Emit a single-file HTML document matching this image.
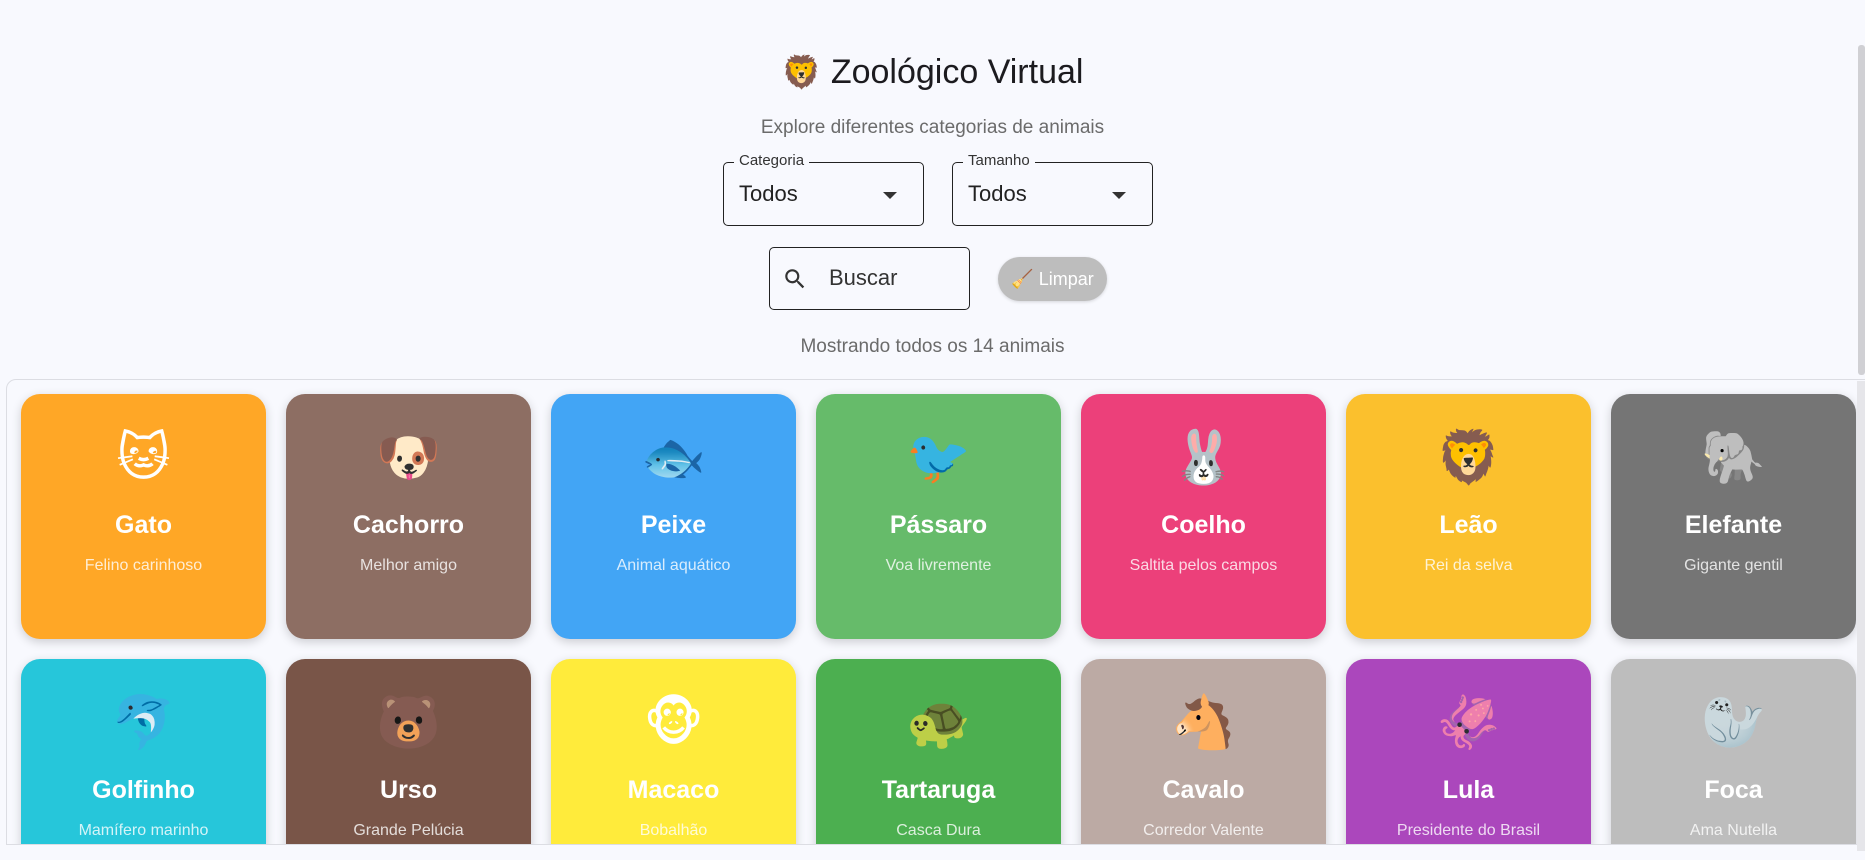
<!DOCTYPE html>
<html><head><meta charset="utf-8"><style>
*{box-sizing:border-box;margin:0;padding:0}
body{width:1865px;height:860px;overflow:hidden;background:#f8f9fe;font-family:"Liberation Sans","DejaVu Sans",sans-serif;position:relative;color:#1c1b1f}
.abs{position:absolute}
h1{position:absolute;left:0;width:1865px;top:50px;text-align:center;font-size:34px;font-weight:500;color:#1c1b1f;line-height:44px}
.sub{left:0;width:1865px;top:117px;text-align:center;font-size:19px;color:#6b6b6b}
.sel{border:1.5px solid #222;border-radius:5px;height:64px;width:201px;top:162px}
.sel .lab{position:absolute;top:-11px;left:10px;background:#f8f9fe;padding:0 5px;font-size:15px;color:#333}
.sel .val{position:absolute;left:15px;top:18px;font-size:22px;color:#222}
.sel .arr{position:absolute;right:26px;top:29px;width:0;height:0;border-left:7px solid transparent;border-right:7px solid transparent;border-top:7px solid #333}
.search{left:769px;top:247px;width:201px;height:63px;border:1.5px solid #222;border-radius:5px}
.btn{left:998px;top:257px;width:109px;height:44px;border-radius:22px;background:#bdbdbd;color:#fff;font-size:18px;line-height:44px;text-align:center;box-shadow:0 1px 3px rgba(0,0,0,.15)}
.count{left:0;width:1865px;top:336px;text-align:center;font-size:19px;color:#6b6b6b}
.grid{left:6px;top:379px;width:1870px;height:466px;border:1px solid #dcdde3;border-radius:10px 0 0 0;overflow:hidden}
.card{position:absolute;width:245px;height:245px;border-radius:19px;box-shadow:0 3px 10px rgba(0,0,0,.18);text-align:center;color:#fff}
.card .e{position:absolute;top:29px;left:0;width:100%;font-size:52px;line-height:70px}
.card .t{position:absolute;top:117px;left:0;width:100%;font-size:25px;font-weight:bold;line-height:28px}
.card .d{position:absolute;top:162px;left:0;width:100%;font-size:16px;line-height:20px;color:rgba(255,255,255,.8)}
.sb{left:1857px;top:381px;width:8px;height:470px;background:#e6e6ea}
</style></head><body>
<h1><span style="font-size:32px">🦁</span> Zoológico Virtual</h1>
<div class="abs sub">Explore diferentes categorias de animais</div>
<div class="abs sel" style="left:723px"><span class="lab">Categoria</span><span class="val">Todos</span><span class="arr"></span></div>
<div class="abs sel" style="left:952px"><span class="lab">Tamanho</span><span class="val">Todos</span><span class="arr"></span></div>
<div class="abs search">
<svg style="position:absolute;left:12px;top:18px" width="26" height="26" viewBox="0 0 24 24"><path d="M15.5 14h-.79l-.28-.27A6.47 6.47 0 0 0 16 9.5 6.5 6.5 0 1 0 9.5 16c1.61 0 3.090-.59 4.230-1.57l.27.28v.79l5 4.99L20.49 19l-4.99-5zm-6 0C7.01 14 5 11.99 5 9.5S7.01 5 9.5 5 14 7.01 14 9.5 11.99 14 9.5 14z" fill="#333"/></svg>
<span style="position:absolute;left:59px;top:17px;font-size:22px;color:#333">Buscar</span></div>
<div class="abs btn">🧹 Limpar</div>
<div class="abs count">Mostrando todos os 14 animais</div>
<div class="abs grid">
<div class="card" style="left:14px;top:14px;background:#FFA726"><div class="e">🐱</div><div class="t">Gato</div><div class="d">Felino carinhoso</div></div>
<div class="card" style="left:279px;top:14px;background:#8D6E63"><div class="e">🐶</div><div class="t">Cachorro</div><div class="d">Melhor amigo</div></div>
<div class="card" style="left:544px;top:14px;background:#42A5F5"><div class="e">🐟</div><div class="t">Peixe</div><div class="d">Animal aquático</div></div>
<div class="card" style="left:809px;top:14px;background:#66BB6A"><div class="e">🐦</div><div class="t">Pássaro</div><div class="d">Voa livremente</div></div>
<div class="card" style="left:1074px;top:14px;background:#EC407A"><div class="e">🐰</div><div class="t">Coelho</div><div class="d">Saltita pelos campos</div></div>
<div class="card" style="left:1339px;top:14px;background:#FBC02D"><div class="e">🦁</div><div class="t">Leão</div><div class="d">Rei da selva</div></div>
<div class="card" style="left:1604px;top:14px;background:#757575"><div class="e">🐘</div><div class="t">Elefante</div><div class="d">Gigante gentil</div></div>
<div class="card" style="left:14px;top:279px;background:#26C6DA"><div class="e">🐬</div><div class="t">Golfinho</div><div class="d">Mamífero marinho</div></div>
<div class="card" style="left:279px;top:279px;background:#795548"><div class="e">🐻</div><div class="t">Urso</div><div class="d">Grande Pelúcia</div></div>
<div class="card" style="left:544px;top:279px;background:#FFEB3B"><div class="e">🐵</div><div class="t">Macaco</div><div class="d">Bobalhão</div></div>
<div class="card" style="left:809px;top:279px;background:#4CAF50"><div class="e">🐢</div><div class="t">Tartaruga</div><div class="d">Casca Dura</div></div>
<div class="card" style="left:1074px;top:279px;background:#BCAAA4"><div class="e">🐴</div><div class="t">Cavalo</div><div class="d">Corredor Valente</div></div>
<div class="card" style="left:1339px;top:279px;background:#AB47BC"><div class="e">🦑</div><div class="t">Lula</div><div class="d">Presidente do Brasil</div></div>
<div class="card" style="left:1604px;top:279px;background:#BDBDBD"><div class="e">🦭</div><div class="t">Foca</div><div class="d">Ama Nutella</div></div>
</div>
<div class="abs sb"></div>
<div class="abs" style="left:1858px;top:45px;width:7px;height:330px;background:#d0d0d4;border-radius:3px"></div>
</body></html>
